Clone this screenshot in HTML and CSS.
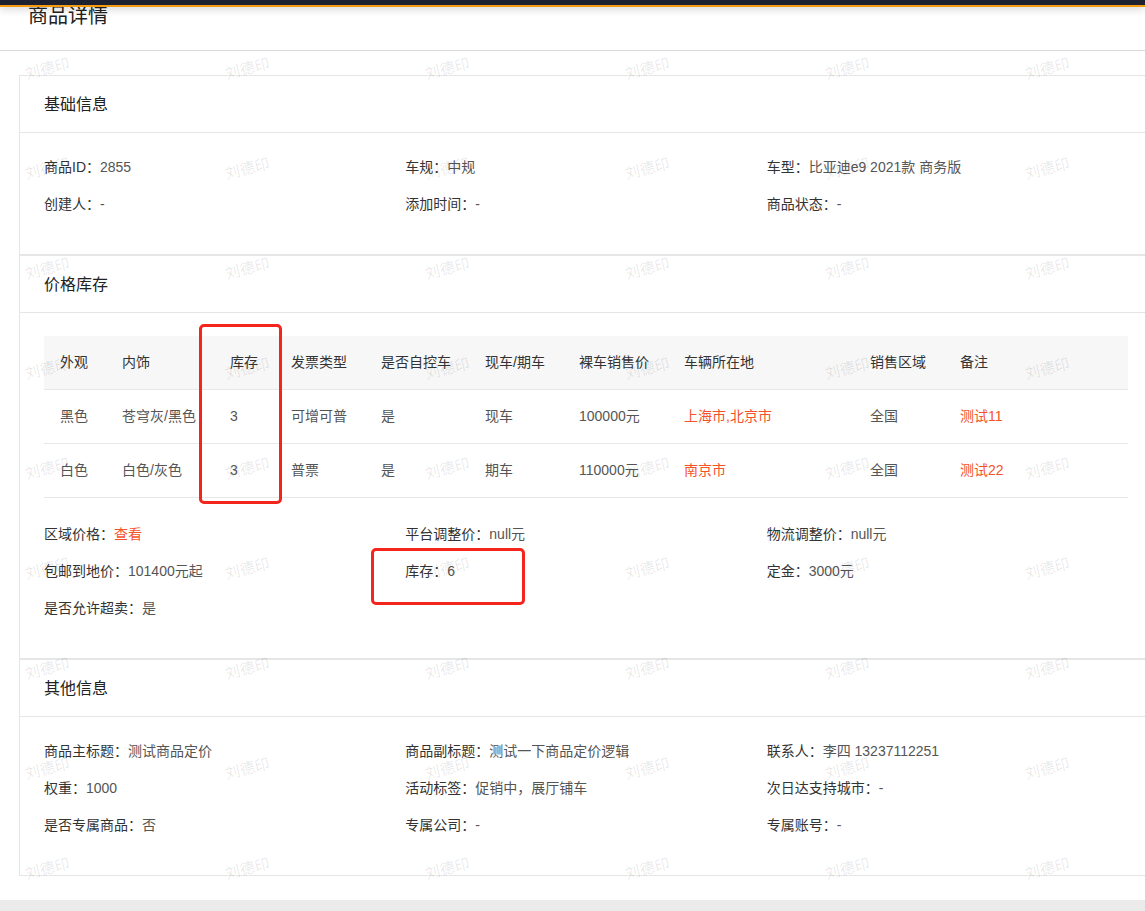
FILE: index.html
```html
<!DOCTYPE html>
<html lang="zh-CN">
<head>
<meta charset="utf-8">
<title>商品详情</title>
<link rel="stylesheet" href="styles.css">
</head>
<body>
<div class="topbar"></div>
<div class="page-head">商品详情</div>

<main class="main">
  <section class="card">
    <div class="card-head">基础信息</div>
    <div class="card-body">
      <div class="info-grid">
        <div class="item"><span class="lab">商品ID：</span><span class="val">2855</span></div>
        <div class="item"><span class="lab">车规：</span><span class="val">中规</span></div>
        <div class="item"><span class="lab">车型：</span><span class="val">比亚迪e9 2021款 商务版</span></div>
        <div class="item"><span class="lab">创建人：</span><span class="val">-</span></div>
        <div class="item"><span class="lab">添加时间：</span><span class="val">-</span></div>
        <div class="item"><span class="lab">商品状态：</span><span class="val">-</span></div>
      </div>
    </div>
  </section>

  <section class="card">
    <div class="card-head">价格库存</div>
    <div class="card-body body-table">
      <table class="stock">
        <colgroup>
          <col class="c1"><col class="c2"><col class="c3"><col class="c4"><col class="c5">
          <col class="c6"><col class="c7"><col class="c8"><col class="c9"><col class="c10">
        </colgroup>
        <thead>
          <tr><th>外观</th><th>内饰</th><th>库存</th><th>发票类型</th><th>是否自控车</th><th>现车/期车</th><th>裸车销售价</th><th>车辆所在地</th><th>销售区域</th><th>备注</th></tr>
        </thead>
        <tbody>
          <tr><td>黑色</td><td>苍穹灰/黑色</td><td>3</td><td>可增可普</td><td>是</td><td>现车</td><td>100000元</td><td class="hl">上海市,北京市</td><td>全国</td><td class="hl">测试11</td></tr>
          <tr><td>白色</td><td>白色/灰色</td><td>3</td><td>普票</td><td>是</td><td>期车</td><td>110000元</td><td class="hl">南京市</td><td>全国</td><td class="hl">测试22</td></tr>
        </tbody>
      </table>
      <div class="info-grid after-table">
        <div class="item"><span class="lab">区域价格：</span><span class="link">查看</span></div>
        <div class="item"><span class="lab">平台调整价：</span><span class="val">null元</span></div>
        <div class="item"><span class="lab">物流调整价：</span><span class="val">null元</span></div>
        <div class="item"><span class="lab">包邮到地价：</span><span class="val">101400元起</span></div>
        <div class="item"><span class="lab">库存：</span><span class="val">6</span></div>
        <div class="item"><span class="lab">定金：</span><span class="val">3000元</span></div>
        <div class="item"><span class="lab">是否允许超卖：</span><span class="val">是</span></div>
      </div>
    </div>
  </section>

  <section class="card">
    <div class="card-head">其他信息</div>
    <div class="card-body">
      <div class="info-grid">
        <div class="item"><span class="lab">商品主标题：</span><span class="val">测试商品定价</span></div>
        <div class="item"><span class="lab">商品副标题：</span><span class="val">测试一下商品定价逻辑</span></div>
        <div class="item"><span class="lab">联系人：</span><span class="val">李四 13237112251</span></div>
        <div class="item"><span class="lab">权重：</span><span class="val">1000</span></div>
        <div class="item"><span class="lab">活动标签：</span><span class="val">促销中，展厅铺车</span></div>
        <div class="item"><span class="lab">次日达支持城市：</span><span class="val">-</span></div>
        <div class="item"><span class="lab">是否专属商品：</span><span class="val">否</span></div>
        <div class="item"><span class="lab">专属公司：</span><span class="val">-</span></div>
        <div class="item"><span class="lab">专属账号：</span><span class="val">-</span></div>
      </div>
    </div>
  </section>
</main>

<div class="foot-band"></div>

<div class="watermark" aria-hidden="true">
  <span>刘德印</span><span>刘德印</span><span>刘德印</span><span>刘德印</span><span>刘德印</span><span>刘德印</span>
  <span>刘德印</span><span>刘德印</span><span>刘德印</span><span>刘德印</span><span>刘德印</span><span>刘德印</span>
  <span>刘德印</span><span>刘德印</span><span>刘德印</span><span>刘德印</span><span>刘德印</span><span>刘德印</span>
  <span>刘德印</span><span>刘德印</span><span>刘德印</span><span>刘德印</span><span>刘德印</span><span>刘德印</span>
  <span>刘德印</span><span>刘德印</span><span>刘德印</span><span>刘德印</span><span>刘德印</span><span>刘德印</span>
  <span>刘德印</span><span>刘德印</span><span>刘德印</span><span>刘德印</span><span>刘德印</span><span>刘德印</span>
  <span>刘德印</span><span>刘德印</span><span>刘德印</span><span>刘德印</span><span>刘德印</span><span>刘德印</span>
  <span>刘德印</span><span>刘德印</span><span>刘德印</span><span>刘德印</span><span>刘德印</span><span>刘德印</span>
  <span>刘德印</span><span>刘德印</span><span>刘德印</span><span>刘德印</span><span>刘德印</span><span>刘德印</span>
</div>

<div class="mark mark-col"></div>
<div class="mark mark-stock"></div>
</body>
</html>
```

FILE: styles.css
```css
* { box-sizing: border-box; }

html, body {
  margin: 0;
  padding: 0;
}

body {
  position: relative;
  width: 1145px;
  height: 911px;
  overflow: hidden;
  background: #fff;
  font-family: "Liberation Sans", "Noto Sans CJK SC", sans-serif;
  font-size: 14px;
  color: #333;
}

.topbar {
  position: relative;
  z-index: 2;
  height: 7px;
  background: #1d2130;
  border-bottom: 2px solid #f59b12;
  box-shadow: 0 2px 9px rgba(0, 0, 0, 0.18);
}

.page-head {
  height: 45px;
  margin-top: -1px;
  padding: 0 28px;
  line-height: 20px;
  font-size: 20px;
  color: #222;
  border-bottom: 1px solid #dadada;
}

.main {
  padding: 24px 0 0 19px;
  width: 1153px;
}

.card {
  border: 1px solid #e6e6e6;
  background: transparent;
}

.card-head {
  height: 57px;
  line-height: 57px;
  padding: 0 24px;
  font-size: 16px;
  color: #222;
  border-bottom: 1px solid #e6e6e6;
}

.card-body {
  padding: 24px 24px 39px;
}

.body-table {
  padding-top: 23px;
}

.info-grid {
  display: grid;
  grid-template-columns: repeat(3, 1fr);
  row-gap: 16px;
  line-height: 21px;
}

.after-table {
  margin-top: 26px;
}

.lab { color: #333; }
.val { color: #555; }
.link { color: #f5522c; }

.stock {
  width: 1084px;
  border-collapse: separate;
  border-spacing: 0;
  table-layout: fixed;
}

.stock col.c1 { width: 62px; }
.stock col.c2 { width: 108px; }
.stock col.c3 { width: 61px; }
.stock col.c4 { width: 90px; }
.stock col.c5 { width: 104px; }
.stock col.c6 { width: 94px; }
.stock col.c7 { width: 105px; }
.stock col.c8 { width: 186px; }
.stock col.c9 { width: 90px; }
.stock col.c10 { width: 184px; }

.stock th,
.stock td {
  padding: 16px 0 16px 16px;
  line-height: 21px;
  text-align: left;
  border-bottom: 1px solid #e8e8e8;
  white-space: nowrap;
}

.stock th {
  font-weight: normal;
  color: #333;
  background: #f7f7f7;
}

.stock td {
  color: #555;
}

.stock td.hl { color: #f5522c; }

.foot-band {
  margin-top: 24px;
  height: 12px;
  background: #ebebeb;
}

/* watermark overlay */
.watermark {
  position: absolute;
  left: -53px;
  top: 17px;
  display: grid;
  grid-template-columns: repeat(6, 200px);
  grid-auto-rows: 100px;
  pointer-events: none;
  z-index: 5;
}

.watermark span {
  display: flex;
  align-items: center;
  justify-content: center;
  font-family: "Noto Sans CJK SC", sans-serif;
  font-size: 15px;
  color: rgba(0, 0, 0, 0.1);
  transform: rotate(-14deg);
}

/* red annotation boxes */
.mark {
  position: absolute;
  border: 3px solid #f4251c;
  border-radius: 5px;
  z-index: 6;
}

.mark-col {
  left: 199px;
  top: 324px;
  width: 83px;
  height: 180px;
}

.mark-stock {
  left: 371px;
  top: 548px;
  width: 154px;
  height: 57px;
}
```
